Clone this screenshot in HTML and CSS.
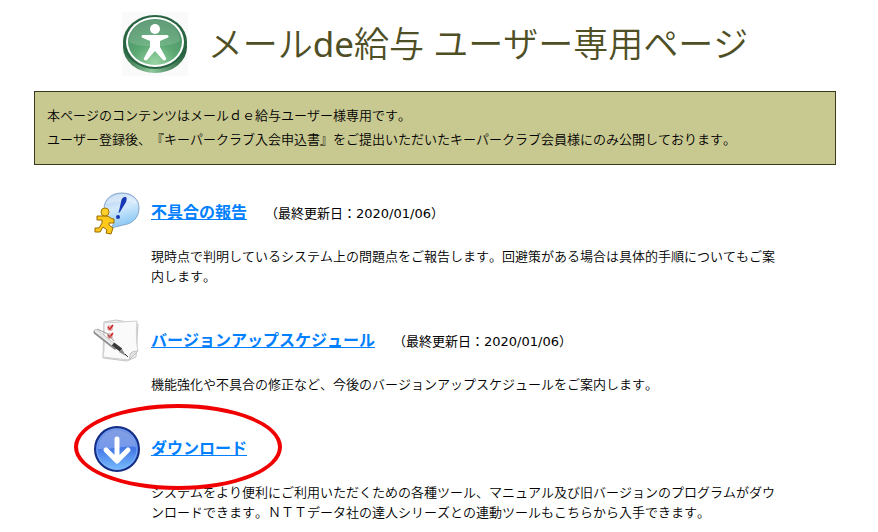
FILE: index.html
```
<!DOCTYPE html>
<html lang="ja">
<head>
    <meta charset="UTF-8">
    <meta name="viewport" content="width=device-width, initial-scale=1.0">
    <title>メールde給与 ユーザー専用ページ</title>
    <link rel="stylesheet" href="styles.css">
</head>
<body>
    <header class="page-header">
        <svg class="logo" viewBox="0 0 66 64" aria-hidden="true">
            <defs>
                <linearGradient id="rim" x1="0" y1="0" x2="1" y2="0">
                    <stop offset="0" stop-color="#2d6b45"/>
                    <stop offset="0.45" stop-color="#8fc99d"/>
                    <stop offset="1" stop-color="#215c39"/>
                </linearGradient>
                <radialGradient id="face" cx="0.5" cy="0.95" r="0.85">
                    <stop offset="0" stop-color="#9bd6a5"/>
                    <stop offset="0.5" stop-color="#5aa772"/>
                    <stop offset="1" stop-color="#4a9065"/>
                </radialGradient>
            </defs>
            <rect width="66" height="64" fill="#fafafa"/>
            <ellipse cx="33" cy="35" rx="32" ry="26" fill="url(#rim)"/>
            <ellipse cx="33" cy="30" rx="32" ry="27" fill="#286442"/>
            <ellipse cx="33" cy="30" rx="29" ry="25" fill="#fff"/>
            <ellipse cx="33" cy="30" rx="27" ry="23" fill="url(#face)"/>
            <path d="M7 30C7 17 18 8 33 8s25 9 25 21c-8 6-38 8-51 1z" fill="#fff" opacity="0.14"/>
            <circle cx="33" cy="17" r="5" fill="#fff"/>
            <path d="M21 23h24c2 0 2 3 0 3l-7 3v6l6 11c1 2-2 3-3 2l-8-9-8 9c-1 1-4 0-3-2l6-11v-6l-7-3c-2 0-2-3 0-3z" fill="#fff"/>
        </svg>
        <h1>メール<span class="latin">de</span>給与 ユーザー専用ページ</h1>
    </header>

    <main>
        <p class="notice">
            本ページのコンテンツはメールｄｅ給与ユーザー様専用です。<br>
            ユーザー登録後、『キーパークラブ入会申込書』をご提出いただいたキーパークラブ会員様にのみ公開しております。
        </p>

        <div class="menu">
            <section class="menu-item">
                <svg class="icon" viewBox="0 0 48 48" aria-hidden="true">
                    <defs>
                        <linearGradient id="bubble" x1="0" y1="0" x2="0.3" y2="1">
                            <stop offset="0" stop-color="#a9c8ed"/>
                            <stop offset="0.5" stop-color="#d4e9fb"/>
                            <stop offset="1" stop-color="#8cc9f5"/>
                        </linearGradient>
                    </defs>
                    <path d="M29 4c10 0 17 6 17 15s-6 16-16 17l-12 3 3-5c-6-3-10-8-10-14C11 10 19 4 29 4z" fill="url(#bubble)" stroke="#86a6cb"/>
                    <path d="M13 15c3-7 9-10 16-10s13 4 15 10c-9-4-21-3-31 0z" fill="#fff" opacity="0.35"/>
                    <path d="M32 8c2 0 2 2 1 5l-6 10c-1 1-2 1-1-1l2-9c0-3 2-5 4-5z" fill="#1738b5"/>
                    <circle cx="25" cy="28" r="2" fill="#1738b5"/>
                    <g stroke-linejoin="round">
                        <path d="M4 27h9c4 0 4 3 8 3v4h-5v2l4 3-2 6-5-1 1-3-4-3-3 5H2v-4h4l3-5v-3H4z" fill="#ffc91c" stroke="#9a6b00"/>
                        <circle cx="12" cy="23" r="4" fill="#ffd02c" stroke="#a87700"/>
                    </g>
                </svg>
                <h2><a href="#report">不具合の報告</a></h2>
                <span class="updated">（最終更新日：2020/01/06）</span>
                <p>現時点で判明しているシステム上の問題点をご報告します。回避策がある場合は具体的手順についてもご案内します。</p>
            </section>

            <section class="menu-item">
                <svg class="icon" viewBox="0 0 48 48" aria-hidden="true">
                    <path d="M11 5l12-2 22 4-2 33-9 4-24-3z" fill="#f1f1f1" stroke="#c4c4c4"/>
                    <path d="M11 6l33-2c-1 12-1 21 1 30l-9 9-26-3c2-10 1-22 1-34z" fill="#fafafa" stroke="#cfcfcf"/>
                    <path d="M45 34c-4 0-6 1-7 2s-1 3-2 7z" fill="#e4e4e4" stroke="#c0c0c0"/>
                    <path d="M15 9h4v4h-4zm0 8h4v4h-4z" fill="#fff" stroke="#c88"/>
                    <path d="M15 10l2 2 3-4m-5 10l2 2 3-4" fill="none" stroke="#d22222" stroke-width="1.5"/>
                    <path d="M3 15l19 15" stroke="#8f8f8f" stroke-width="5" stroke-linecap="round"/>
                    <path d="M3 14l19 15" stroke="#e8e8e8" stroke-width="3" stroke-linecap="round"/>
                    <path d="M4 12l11 5 6 7" stroke="#999" fill="none"/>
                    <path d="M20 27l8 6" stroke="#3a3a3a" stroke-width="4"/>
                    <path d="M29 32l4 7-7-4z" fill="#888"/>
                    <path d="M32 37l3 3" stroke="#333"/>
                </svg>
                <h2><a href="#schedule">バージョンアップスケジュール</a></h2>
                <span class="updated">（最終更新日：2020/01/06）</span>
                <p>機能強化や不具合の修正など、今後のバージョンアップスケジュールをご案内します。</p>
            </section>

            <section class="menu-item marked">
                <svg class="icon" viewBox="0 0 48 48" aria-hidden="true">
                    <defs>
                        <linearGradient id="ball" x1="0" y1="0" x2="0" y2="1">
                            <stop offset="0" stop-color="#5b7ed8"/>
                            <stop offset="0.5" stop-color="#4678e6"/>
                            <stop offset="1" stop-color="#78c0ff"/>
                        </linearGradient>
                    </defs>
                    <circle cx="24" cy="24" r="22" fill="url(#ball)" stroke="#132c84" stroke-width="2"/>
                    <circle cx="24" cy="24" r="20" fill="none" stroke="#8bb4f5" opacity="0.7"/>
                    <path d="M5 24C5 13 13 5 24 5s19 8 19 17c-12-2-25 3-38 2z" fill="#fff" opacity="0.25"/>
                    <path d="M24 14v21M13 25l11 11 11-11" fill="none" stroke="#fff" stroke-width="5" stroke-linecap="round" stroke-linejoin="round"/>
                </svg>
                <h2><a href="#download">ダウンロード</a></h2>
                <p>システムをより便利にご利用いただくための各種ツール、マニュアル及び旧バージョンのプログラムがダウンロードできます。ＮＴＴデータ社の達人シリーズとの連動ツールもこちらから入手できます。</p>
            </section>
        </div>
    </main>
</body>
</html>
```

FILE: styles.css
```
body {
    font-family: "DejaVu Sans", "Noto Sans CJK JP", sans-serif;
    font-size: 13px;
    line-height: 20px;
    font-kerning: none;
    text-spacing-trim: space-all;
    color: #000;
    background: #fff;
    margin: 0;
    padding: 12px 42px 8px 34px;
}
.page-header {
    display: flex;
    justify-content: center;
    align-items: center;
    gap: 20px;
    height: 64px;
    margin-bottom: 15px;
}
.logo {
    width: 66px;
    height: 64px;
}
h1 {
    font-family: "Noto Sans", "Noto Sans CJK JP", sans-serif;
    font-size: 35px;
    font-weight: 350;
    line-height: 48px;
    color: #4f4f26;
    margin: 0;
}
h1 .latin {
    font-weight: 400;
}
p {
    font-weight: 350;
}
.notice {
    background: #c8c891;
    border: 1px solid #3b3b1b;
    line-height: 24px;
    margin: 0 0 24px;
    padding: 12px;
}
.menu {
    display: flex;
    flex-direction: column;
    gap: 30px;
    padding: 0 52px 0 59px;
}
.menu-item {
    display: grid;
    grid-template-columns: 48px auto 1fr;
    column-gap: 10px;
    row-gap: 10px;
    align-items: center;
    position: relative;
}
.icon {
    width: 48px;
    height: 48px;
}
h2 {
    font-size: 16px;
    line-height: 24px;
    margin: 0;
}
h2 a {
    color: #0080ff;
    text-decoration: underline;
}
.updated {
    padding: 2px 0 0 8px;
}
.menu-item p {
    grid-column: 2 / 4;
    margin: 0;
}
/* red ring round the download link */
.marked::after {
    content: '';
    position: absolute;
    top: -21px;
    left: -19px;
    width: 200px;
    height: 78px;
    border: 4px solid #f00000;
    border-radius: 50%;
    pointer-events: none;
}
```
